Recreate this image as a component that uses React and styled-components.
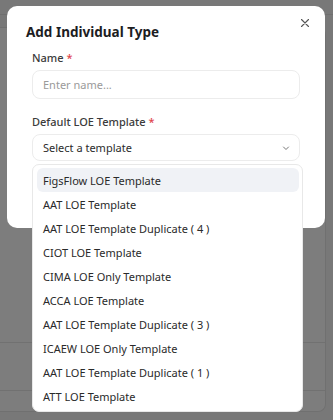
import React from 'react';
import styled, { createGlobalStyle } from 'styled-components';

const GlobalStyle = createGlobalStyle`
  html, body {
    margin: 0;
    padding: 0;
    width: 333px;
    height: 420px;
    overflow: hidden;
    font-family: "Noto Sans", "DejaVu Sans", sans-serif;
    background: #f4f4f4;
  }
`;

// page behind the dialog
const Page = styled.div`
  width: 333px;
  height: 420px;
  display: flex;
  flex-direction: column;
`;

const TopBar = styled.div`
  height: 14px;
  display: flex;
  align-items: flex-end;
  gap: 14px;
  padding-left: 24px;
  border-bottom: 1px solid #e2e2e2;
`;

const Avatar = styled.div`
  width: 16px;
  height: 16px;
  border-radius: 50%;
  margin-bottom: -8px;
  background: ${p => p.$bg};
`;

const Body = styled.div`
  flex: 1;
  display: flex;
  padding: 12px 0 8px 0;
`;

const Card = styled.div`
  flex: 1;
  margin-right: 7px;
  border: 1px solid #e4e4e4;
  border-left: none;
  border-radius: 0 8px 8px 0;
  background: #fff;
  display: flex;
  flex-direction: column;
  justify-content: flex-end;
`;

const CardRow = styled.div`
  height: ${p => p.$h}px;
  border-top: 1px solid #e6e6e6;
`;

const Overlay = styled.div`
  position: fixed;
  inset: 0;
  background: rgba(0, 0, 0, 0.51);
`;

const Modal = styled.div`
  position: fixed;
  left: 7px;
  top: 6px;
  width: 318px;
  height: 222px;
  background: #fff;
  border-radius: 10px;
  box-sizing: border-box;
  padding: 16px 25px 0 19px;
`;

const Close = styled.button`
  position: absolute;
  top: 9px;
  right: 12px;
  width: 16px;
  height: 16px;
  padding: 0;
  border: none;
  background: none;
  color: #555;
  display: flex;
  align-items: center;
  justify-content: center;
`;

const Title = styled.h2`
  margin: 0 0 9px 0;
  font-size: 13.5px;
  font-weight: 700;
  color: #1d1d1f;
  line-height: 20px;
`;

const Field = styled.div`
  padding-left: 6px;
  margin-bottom: 16px;
`;

const Label = styled.div`
  font-size: 11px;
  font-weight: 500;
  color: #3b3b3b;
  line-height: 14px;
  margin-bottom: 5px;
`;

const Star = styled.span`
  color: #e0434b;
`;

const Input = styled.div`
  height: 29px;
  border: 1px solid #ececec;
  border-radius: 8px;
  box-sizing: border-box;
  display: flex;
  align-items: center;
  padding-left: 10px;
  font-size: 11px;
  color: ${p => (p.$placeholder ? '#9a9a9a' : '#2b2b2b')};
`;

const Select = styled(Input)`
  height: 27px;
  justify-content: space-between;
  padding-right: 8px;
`;

const Menu = styled.div`
  position: fixed;
  left: 32px;
  top: 164px;
  width: 271px;
  height: 248px;
  box-sizing: border-box;
  background: #fff;
  border: 1px solid #e8e8e8;
  border-radius: 7px;
  padding: 3px 4px;
  display: flex;
  flex-direction: column;
`;

const Item = styled.div`
  height: 24px;
  flex-shrink: 0;
  width: 262px;
  box-sizing: border-box;
  border-radius: 6px;
  display: flex;
  align-items: center;
  padding-left: 6px;
  font-size: 11px;
  color: #2a2a2a;
  background: ${p => (p.$active ? '#f0f2f6' : 'transparent')};
`;

const templates = [
  'FigsFlow LOE Template',
  'AAT LOE Template',
  'AAT LOE Template Duplicate ( 4 )',
  'CIOT LOE Template',
  'CIMA LOE Only Template',
  'ACCA LOE Template',
  'AAT LOE Template Duplicate ( 3 )',
  'ICAEW LOE Only Template',
  'AAT LOE Template Duplicate ( 1 )',
  'ATT LOE Template',
];

const App = () => {
  return (
    <>
      <GlobalStyle />
      <Page>
        <TopBar>
          <Avatar $bg="#e7c48a" />
          <Avatar $bg="#e3e3e3" />
        </TopBar>
        <Body>
          <Card>
            <CardRow $h={47} />
            <CardRow $h={20} />
          </Card>
        </Body>
      </Page>
      <Overlay />
      <Modal>
        <Close>
          <svg width="10" height="10" viewBox="0 0 10 10">
            <path d="M1.5 1.5 L8.5 8.5 M8.5 1.5 L1.5 8.5" stroke="#555" strokeWidth="1.1" strokeLinecap="round" />
          </svg>
        </Close>
        <Title>Add Individual Type</Title>
        <Field>
          <Label>Name <Star>*</Star></Label>
          <Input $placeholder>Enter name...</Input>
        </Field>
        <Field>
          <Label>Default LOE Template <Star>*</Star></Label>
          <Select>
            <span>Select a template</span>
            <svg width="10" height="10" viewBox="0 0 10 10">
              <path d="M2.5 4 L5 6.5 L7.5 4" stroke="#777" strokeWidth="1" fill="none" strokeLinecap="round" strokeLinejoin="round" />
            </svg>
          </Select>
        </Field>
      </Modal>
      <Menu>
        {templates.map((t, i) => (
          <Item key={t} $active={i === 0}>{t}</Item>
        ))}
      </Menu>
    </>
  );
};

export default App;
